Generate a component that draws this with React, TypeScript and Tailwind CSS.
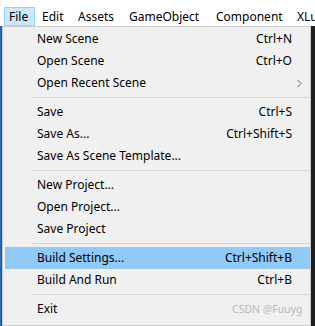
type Entry =
    | { kind: 'item'; label: string; shortcut?: string; submenu?: boolean; active?: boolean }
    | { kind: 'sep' };

const ENTRIES: Entry[] = [
    { kind: 'item', label: 'New Scene', shortcut: 'Ctrl+N' },
    { kind: 'item', label: 'Open Scene', shortcut: 'Ctrl+O' },
    { kind: 'item', label: 'Open Recent Scene', submenu: true },
    { kind: 'sep' },
    { kind: 'item', label: 'Save', shortcut: 'Ctrl+S' },
    { kind: 'item', label: 'Save As...', shortcut: 'Ctrl+Shift+S' },
    { kind: 'item', label: 'Save As Scene Template...' },
    { kind: 'sep' },
    { kind: 'item', label: 'New Project...' },
    { kind: 'item', label: 'Open Project...' },
    { kind: 'item', label: 'Save Project' },
    { kind: 'sep' },
    { kind: 'item', label: 'Build Settings...', shortcut: 'Ctrl+Shift+B', active: true },
    { kind: 'item', label: 'Build And Run', shortcut: 'Ctrl+B' },
    { kind: 'sep' },
    { kind: 'item', label: 'Exit' },
];

export default function App() {
    return (
        <div className="relative w-[315px] h-[326px] overflow-hidden bg-[#1f1f1f] text-[12px] leading-none text-black font-['Noto_Sans',sans-serif]">
            {/* menu bar */}
            <div className="h-[26px] bg-white flex items-start pt-[7px] pl-[4px] whitespace-nowrap">
                <div className="h-[19px] w-[31px] shrink-0 pl-[4px] flex items-center bg-[#cce8ff] border border-[#99d1ff]">
                    File
                </div>
                <div className="h-[19px] w-[36px] shrink-0 pl-[7px] flex items-center">Edit</div>
                <div className="h-[19px] w-[51px] shrink-0 pl-[7px] flex items-center">Assets</div>
                <div className="h-[19px] w-[87px] shrink-0 pl-[7px] flex items-center">GameObject</div>
                <div className="h-[19px] w-[81px] shrink-0 pl-[7px] flex items-center">Component</div>
                <div className="h-[19px] shrink-0 pl-[7px] flex items-center">XLua</div>
            </div>

            <div className="flex">
                <div className="w-[1px] h-[300px] bg-[#2f6db3]" />
                <div className="w-[1px] h-[300px] bg-[#4b4b4b]" />
                {/* dropdown */}
                <div className="w-[309px] bg-[#f0f0f0] border border-[#cccccc] pl-[2px] pt-[1px]">
                    {ENTRIES.map((e, i) =>
                        e.kind === 'sep' ? (
                            <div key={i} className="h-[7px] flex items-center pl-[28px]">
                                <div className="h-px flex-1 bg-[#d7d7d7]" />
                            </div>
                        ) : (
                            <div
                                key={i}
                                className={`h-[22px] flex items-center pl-[32px] ${e.active ? 'bg-[#91c9f7]' : ''}`}
                            >
                                <span className="flex-1">{e.label}</span>
                                {e.shortcut && <span>{e.shortcut}</span>}
                                <span className="w-[18px] h-full flex items-center pl-[5px]">
                                    {e.submenu && (
                                        <svg width="5" height="9" viewBox="0 0 5 9">
                                            <path d="M0.8 1 L4 4.5 L0.8 8" fill="none" stroke="#6b6b6b" strokeWidth="1" />
                                        </svg>
                                    )}
                                </span>
                            </div>
                        )
                    )}
                </div>
            </div>

            <span className="absolute left-[232px] top-[304px] text-[10.5px] leading-none text-[#b9b9b9]">
                CSDN @Fuuyg
            </span>
        </div>
    );
}
